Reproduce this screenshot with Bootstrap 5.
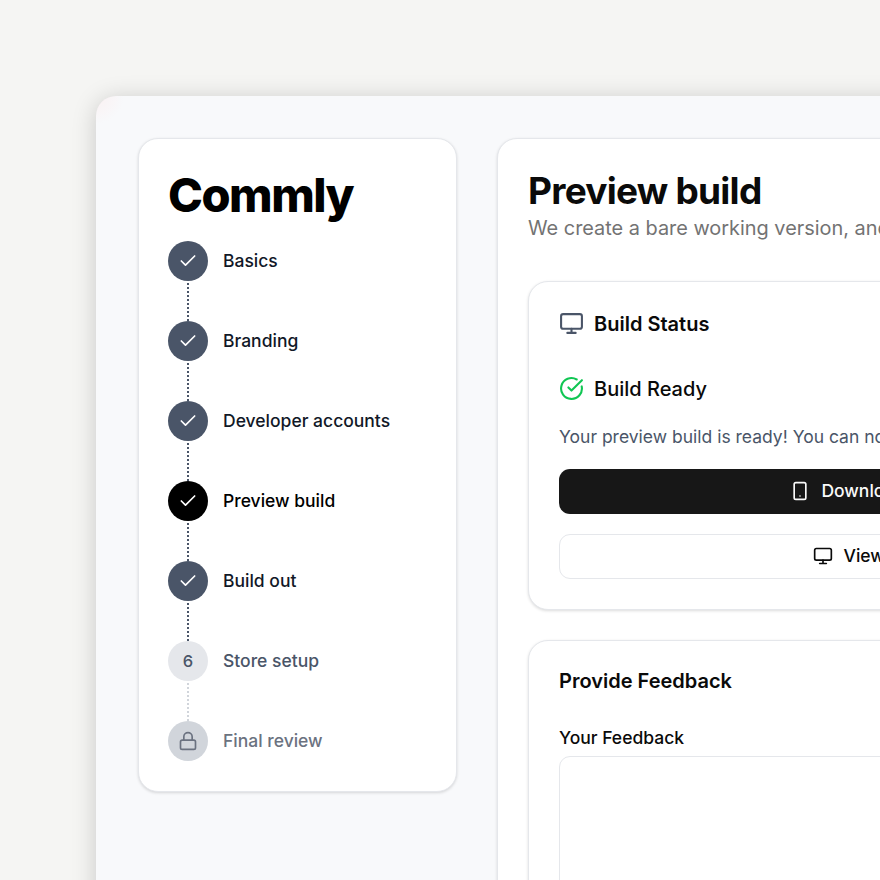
<!DOCTYPE html>
<html lang="en">
<head>
<meta charset="utf-8">
<title>Commly – Preview build</title>
<link href="https://cdn.jsdelivr.net/npm/bootstrap@5.3.0/dist/css/bootstrap.min.css" rel="stylesheet">
<style>
html, body { height: 880px; overflow: hidden; }
body { background: #f5f5f3; font-family: Inter, "Liberation Sans", sans-serif; padding: 96px 0 0 96px; color: #0a0a0a; }
.app-window { width: 1300px; height: 1200px; background: radial-gradient(circle at 0 0, rgba(255,225,225,.35), rgba(255,225,225,0) 28px), #f8f9fb; border-radius: 20px; box-shadow: 0 3px 24px rgba(0,0,0,.18); padding: 41.5px; gap: 40.5px; }
.panel { background: #fff; border: 1px solid #e5e7eb; border-radius: 20px; box-shadow: 0 1px 3px rgba(0,0,0,.14); }
.side-panel { width: 319px; height: 654px; padding: 30px 29.5px; flex: none; }
.logo-text { font-family: Inter, sans-serif; font-weight: 800; font-size: 47px; letter-spacing: -1.5px; line-height: 52px; color: #000; margin: 0 0 20px; }
.step-item { height: 80px; gap: 15px; position: relative; font-size: 17.5px; font-weight: 450; color: #111827; line-height: 40px; }
.step-item:last-child { height: 40px; }
.step-dot { width: 40px; height: 40px; border-radius: 50%; background: #4a5568; flex: none; color: #fff; }
.step-line { position: absolute; left: 19px; top: 42px; height: 38px; border-left: 2px dotted #4a5568; }
.line-light { border-left-color: #d1d5db; }
.dot-active { background: #000; }
.dot-next { background: #e5e7eb; color: #4a5568; font-size: 16.5px; }
.dot-locked { background: #d1d5db; }
.text-next { color: #4a5568; }
.text-locked { color: #6b7280; }
.text-active { color: #000; }
.main-panel { width: 800px; flex: none; padding: 30px; }
.page-title { font-size: 37px; font-weight: 700; letter-spacing: -.75px; line-height: 44px; margin: 0; color: #0a0a0a; }
.page-sub { font-size: 19.9px; line-height: 30px; color: #737373; margin: 0 0 38px; white-space: nowrap; }
.sub-card { padding: 28px 30px 30px; margin-bottom: 30px; border-radius: 20px; }
.sub-card-feedback { padding-top: 26px; }
.card-head { font-size: 20px; font-weight: 600; line-height: 28px; margin: 0; gap: 10px; color: #0a0a0a; }
.ready-head { font-size: 20px; font-weight: 500; line-height: 28px; gap: 10px; margin: 37px 0 20px; color: #0a0a0a; }
.ready-copy { font-size: 17.5px; line-height: 28px; color: #4a5568; margin: 0 0 18px; font-weight: 400; }
.btn-build { width: 680px; height: 45px; border-radius: 11px; font-size: 17.5px; font-weight: 500; gap: 11px; background: #171717; color: #fafafa; border: 0; margin-bottom: 20px; }
.btn-web { background: #fff; color: #0a0a0a; border: 1px solid #e5e7eb; margin-bottom: 0; gap: 10px; }
.feedback-title { font-size: 20px; font-weight: 600; line-height: 28px; margin: 0 0 29px; color: #0a0a0a; }
.feedback-label { font-size: 17.5px; font-weight: 450; line-height: 28px; margin: 0 0 4px; display: block; color: #0a0a0a; }
.feedback-box { width: 680px; height: 200px; border: 1px solid #e5e7eb; border-radius: 11px; box-shadow: none; }
</style>
</head>
<body>
<div class="app-window d-flex align-items-start">
  <aside class="panel side-panel">
    <h1 class="logo-text">Commly</h1>
    <div class="step-item d-flex"><span class="step-dot d-flex align-items-center justify-content-center"><svg width="20" height="20" viewBox="0 0 24 24" fill="none" stroke="currentColor" stroke-width="2" stroke-linecap="round" stroke-linejoin="round"><path d="M20 6 9 17l-5-5"/></svg></span><span>Basics</span><i class="step-line"></i></div>
    <div class="step-item d-flex"><span class="step-dot d-flex align-items-center justify-content-center"><svg width="20" height="20" viewBox="0 0 24 24" fill="none" stroke="currentColor" stroke-width="2" stroke-linecap="round" stroke-linejoin="round"><path d="M20 6 9 17l-5-5"/></svg></span><span>Branding</span><i class="step-line"></i></div>
    <div class="step-item d-flex"><span class="step-dot d-flex align-items-center justify-content-center"><svg width="20" height="20" viewBox="0 0 24 24" fill="none" stroke="currentColor" stroke-width="2" stroke-linecap="round" stroke-linejoin="round"><path d="M20 6 9 17l-5-5"/></svg></span><span>Developer accounts</span><i class="step-line"></i></div>
    <div class="step-item d-flex"><span class="step-dot dot-active d-flex align-items-center justify-content-center"><svg width="20" height="20" viewBox="0 0 24 24" fill="none" stroke="currentColor" stroke-width="2" stroke-linecap="round" stroke-linejoin="round"><path d="M20 6 9 17l-5-5"/></svg></span><span class="text-active">Preview build</span><i class="step-line"></i></div>
    <div class="step-item d-flex"><span class="step-dot d-flex align-items-center justify-content-center"><svg width="20" height="20" viewBox="0 0 24 24" fill="none" stroke="currentColor" stroke-width="2" stroke-linecap="round" stroke-linejoin="round"><path d="M20 6 9 17l-5-5"/></svg></span><span>Build out</span><i class="step-line"></i></div>
    <div class="step-item d-flex"><span class="step-dot dot-next d-flex align-items-center justify-content-center">6</span><span class="text-next">Store setup</span><i class="step-line line-light"></i></div>
    <div class="step-item d-flex"><span class="step-dot dot-locked d-flex align-items-center justify-content-center"><svg width="20" height="20" viewBox="0 0 24 24" fill="none" stroke="#6b7280" stroke-width="2" stroke-linecap="round" stroke-linejoin="round"><rect x="3" y="11" width="18" height="11" rx="2" ry="2"/><path d="M7 11V7a5 5 0 0 1 10 0v4"/></svg></span><span class="text-locked">Final review</span></div>
  </aside>
  <main class="panel main-panel">
    <h2 class="page-title">Preview build</h2>
    <p class="page-sub">We create a bare working version, and you can try it out before we finish the rest.</p>
    <section class="panel sub-card">
      <h3 class="card-head d-flex align-items-center"><svg width="25" height="25" viewBox="0 0 24 24" fill="none" stroke="#4a5568" stroke-width="2" stroke-linecap="round" stroke-linejoin="round"><rect x="2" y="3" width="20" height="14" rx="2"/><path d="M8 21h8M12 17v4"/></svg>Build Status</h3>
      <div class="ready-head d-flex align-items-center"><svg width="25" height="25" viewBox="0 0 24 24" fill="none" stroke="#10c653" stroke-width="2" stroke-linecap="round" stroke-linejoin="round"><path d="M21.8 10A10 10 0 1 1 17 3.34"/><path d="m9 11 3 3L22 4"/></svg>Build Ready</div>
      <p class="ready-copy text-nowrap">Your preview build is ready! You can now test it on your device or in the browser.</p>
      <button class="btn btn-build d-flex align-items-center justify-content-center"><svg width="20" height="20" viewBox="0 0 24 24" fill="none" stroke="currentColor" stroke-width="2" stroke-linecap="round" stroke-linejoin="round"><rect x="5" y="2" width="14" height="20" rx="2"/><path d="M12 18h.01"/></svg>Download Latest Build</button>
      <button class="btn btn-build btn-web d-flex align-items-center justify-content-center"><svg width="20" height="20" viewBox="0 0 24 24" fill="none" stroke="currentColor" stroke-width="2" stroke-linecap="round" stroke-linejoin="round"><rect x="2" y="3" width="20" height="14" rx="2"/><path d="M8 21h8M12 17v4"/></svg>View on Desktop</button>
    </section>
    <section class="panel sub-card sub-card-feedback">
      <h3 class="feedback-title">Provide Feedback</h3>
      <label class="feedback-label" for="fb">Your Feedback</label>
      <textarea id="fb" class="form-control feedback-box"></textarea>
    </section>
  </main>
</div>
<script src="https://cdn.jsdelivr.net/npm/bootstrap@5.3.0/dist/js/bootstrap.bundle.min.js"></script>
</body>
</html>
